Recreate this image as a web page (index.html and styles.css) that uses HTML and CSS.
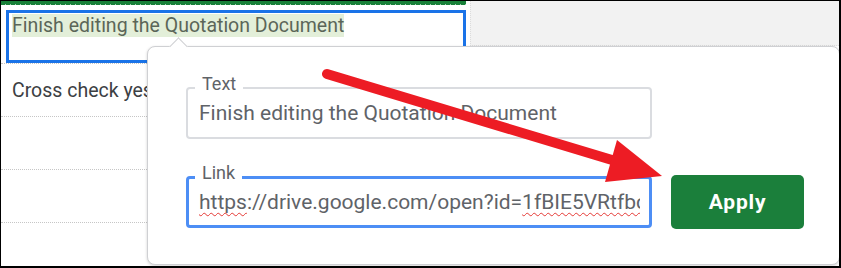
FILE: index.html
```html
<!DOCTYPE html>
<html>
<head>
    <title>Insert link</title>
    <link rel="stylesheet" href="styles.css">
</head>
<body>
    <div class="sheet">
        <div class="top">
            <div class="top-left">
                <div class="range-line"></div>
                <div class="cell-active"><span class="highlight">Finish editing the Quotation Document</span></div>
            </div>
            <div class="cell-gray"></div>
        </div>
        <div class="row">Cross check yesterday's invoices</div>
        <div class="row"></div>
        <div class="row"></div>
        <div class="row"></div>

        <div class="link-popup">
            <div class="field">
                <span class="field-label">Text</span>
                <div class="field-value">Finish editing the Quotation Document</div>
            </div>
            <div class="field field-focus">
                <span class="field-label">Link</span>
                <div class="field-value"><span class="typo">https</span>://drive.google.com/open?id=<span class="typo">1fBIE5VRtfbcQx2</span></div>
            </div>
            <button class="apply">Apply</button>
        </div>

        <svg class="arrow" viewBox="0 0 841 268" width="841" height="268">
            <line x1="327" y1="74" x2="622" y2="163" stroke="#ed1c24" stroke-width="10" stroke-linecap="round"/>
            <polygon points="617,140 662,176 605,182" fill="#ed1c24"/>
        </svg>
    </div>
</body>
</html>
```

FILE: styles.css
```css
body {
    margin: 0;
    font-family: Roboto, "Liberation Sans", Arial, sans-serif;
}

.sheet {
    position: relative;
    width: 841px;
    height: 268px;
    box-sizing: border-box;
    border-top: 1px solid #000;
    border-left: 1px solid #000;
    border-right: 2px solid #000;
    border-bottom: 2px solid #000;
    background-color: #fff;
    overflow: hidden;
}

.top {
    display: flex;
    height: 62px;
}

.top-left {
    width: 465px;
}

.range-line {
    height: 4px;
    background-color: #188038;
    background-image: repeating-linear-gradient(90deg, #188038 0 4px, #9fd0b0 4px 5px);
    background-size: 100% 1px;
    background-repeat: no-repeat;
    background-position: bottom;
}

.cell-active {
    box-sizing: border-box;
    width: 460px;
    height: 53px;
    margin: 5px 0 0 5px;
    border: 3px solid #1a73e8;
    padding: 0 3px;
    font-size: 19.5px;
    line-height: 25px;
    color: #5b6658;
    white-space: nowrap;
}

.highlight {
    background-color: #e3efd9;
}

.cell-gray {
    flex: 1;
    height: 44px;
    margin-left: 4px;
    background-color: #f2f2f2;
    border-left: 1px dotted #dcdcdc;
    border-bottom: 1px dotted #dcdcdc;
}

.row {
    box-sizing: border-box;
    height: 53px;
    border-top: 1px dotted #c6c6c6;
    padding: 16px 0 0 11px;
    font-size: 19.5px;
    line-height: 22px;
    color: #3c4043;
    white-space: nowrap;
}

.link-popup {
    position: absolute;
    left: 146px;
    top: 45px;
    width: 693px;
    height: 219px;
    box-sizing: border-box;
    padding: 40px 0 0 38px;
    background-color: #fff;
    border: 1px solid #cfd0d3;
    border-radius: 8px;
    box-shadow: 0 1px 3px rgba(0, 0, 0, 0.18);
    display: grid;
    grid-template-columns: 466px 133px;
    grid-template-rows: 52px 52px;
    column-gap: 19px;
    row-gap: 37px;
    align-content: start;
}

.link-popup::before {
    content: "";
    position: absolute;
    left: 24px;
    top: -7px;
    width: 12px;
    height: 12px;
    background-color: #fff;
    border-left: 1px solid #cfd0d3;
    border-top: 1px solid #cfd0d3;
    transform: rotate(45deg);
}

.field {
    position: relative;
    grid-column: 1;
    box-sizing: border-box;
    height: 52px;
    border: 2px solid #dadce0;
    border-radius: 4px;
    padding: 0 9px 0 11px;
}

.field-focus {
    border: 3px solid #4d8ef5;
    padding-left: 10px;
}

.field-focus .field-label {
    left: 6px;
    top: -16px;
}

.field-focus .field-value {
    line-height: 46px;
}

.field-label {
    position: absolute;
    left: 7px;
    top: -15px;
    padding: 0 7px;
    background-color: #fff;
    font-size: 18px;
    line-height: 20px;
    color: #5f6368;
}

.field-value {
    font-size: 21px;
    line-height: 48px;
    color: #5f6368;
    white-space: nowrap;
    overflow: hidden;
}

.typo {
    text-decoration: underline wavy #e53935;
    text-decoration-thickness: 1px;
    text-underline-offset: 3px;
    text-decoration-skip-ink: none;
}

.apply {
    grid-column: 2;
    grid-row: 2;
    height: 54px;
    align-self: center;
    background-color: #1b7f3b;
    color: #fff;
    border: none;
    border-radius: 5px;
    font-family: Roboto, "Liberation Sans", Arial, sans-serif;
    font-size: 21px;
    font-weight: 700;
    letter-spacing: 0.8px;
    cursor: pointer;
}

.arrow {
    position: absolute;
    left: -1px;
    top: -1px;
}
```
